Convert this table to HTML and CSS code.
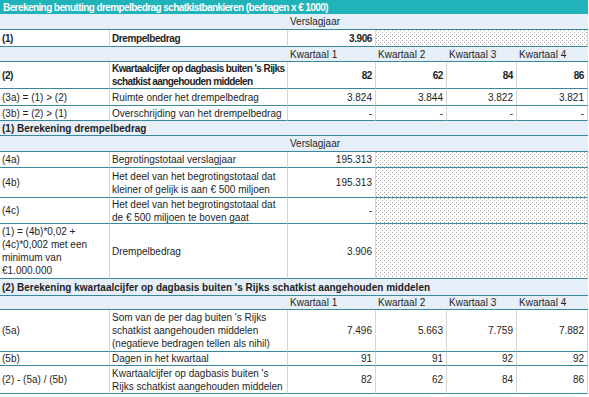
FILE: index.html
```html
<!DOCTYPE html>
<html lang="nl">
<head>
<meta charset="utf-8">
<title>Berekening benutting drempelbedrag</title>
<link rel="stylesheet" href="styles.css">
</head>
<body>
<div class="sheet">
  <div class="title span6">Berekening benutting drempelbedrag schatkistbankieren (bedragen x € 1000)</div>

  <div class="hdr span2"></div>
  <div class="hdr span4">Verslagjaar</div>

  <div class="c b">(1)</div>
  <div class="c b">Drempelbedrag</div>
  <div class="c num b">3.906</div>
  <div class="dots span3"></div>

  <div class="hdr span2"></div>
  <div class="hdr">Kwartaal 1</div>
  <div class="hdr">Kwartaal 2</div>
  <div class="hdr">Kwartaal 3</div>
  <div class="hdr">Kwartaal 4</div>

  <div class="c b">(2)</div>
  <div class="c b cond">Kwartaalcijfer op dagbasis buiten 's Rijks<br>schatkist aangehouden middelen</div>
  <div class="c num b">82</div>
  <div class="c num b">62</div>
  <div class="c num b">84</div>
  <div class="c num b">86</div>

  <div class="c">(3a) = (1) &gt; (2)</div>
  <div class="c">Ruimte onder het drempelbedrag</div>
  <div class="c num">3.824</div>
  <div class="c num">3.844</div>
  <div class="c num">3.822</div>
  <div class="c num">3.821</div>

  <div class="c">(3b) = (2) &gt; (1)</div>
  <div class="c">Overschrijding van het drempelbedrag</div>
  <div class="c num">-</div>
  <div class="c num">-</div>
  <div class="c num">-</div>
  <div class="c num">-</div>

  <div class="hdr span6 sec">(1) Berekening drempelbedrag</div>

  <div class="hdr span2"></div>
  <div class="hdr span4">Verslagjaar</div>

  <div class="c">(4a)</div>
  <div class="c">Begrotingstotaal verslagjaar</div>
  <div class="c num">195.313</div>
  <div class="dots span3"></div>

  <div class="c">(4b)</div>
  <div class="c">Het deel van het begrotingstotaal dat<br>kleiner of gelijk is aan € 500 miljoen</div>
  <div class="c num">195.313</div>
  <div class="dots span3"></div>

  <div class="c">(4c)</div>
  <div class="c">Het deel van het begrotingstotaal dat<br>de € 500 miljoen te boven gaat</div>
  <div class="c num">-</div>
  <div class="dots span3"></div>

  <div class="c">(1) = (4b)*0,02 +<br>(4c)*0,002 met een<br>minimum van<br>€1.000.000</div>
  <div class="c">Drempelbedrag</div>
  <div class="c num">3.906</div>
  <div class="dots span3"></div>

  <div class="hdr span6 sec">(2) Berekening kwartaalcijfer op dagbasis buiten 's Rijks schatkist aangehouden middelen</div>

  <div class="hdr span2"></div>
  <div class="hdr">Kwartaal 1</div>
  <div class="hdr">Kwartaal 2</div>
  <div class="hdr">Kwartaal 3</div>
  <div class="hdr">Kwartaal 4</div>

  <div class="c">(5a)</div>
  <div class="c">Som van de per dag buiten 's Rijks<br>schatkist aangehouden middelen<br>(negatieve bedragen tellen als nihil)</div>
  <div class="c num">7.496</div>
  <div class="c num">5.663</div>
  <div class="c num">7.759</div>
  <div class="c num">7.882</div>

  <div class="c">(5b)</div>
  <div class="c">Dagen in het kwartaal</div>
  <div class="c num">91</div>
  <div class="c num">91</div>
  <div class="c num">92</div>
  <div class="c num">92</div>

  <div class="c">(2) - (5a) / (5b)</div>
  <div class="c">Kwartaalcijfer op dagbasis buiten 's<br>Rijks schatkist aangehouden middelen</div>
  <div class="c num">82</div>
  <div class="c num">62</div>
  <div class="c num">84</div>
  <div class="c num">86</div>
</div>
</body>
</html>
```

FILE: styles.css
```css
html, body {
  margin: 0;
  padding: 0;
  background: #ffffff;
}

.sheet {
  display: grid;
  width: 588px;
  grid-template-columns: 110px 178px 88px 71px 70px 71px;
  grid-template-rows: 14px 16px 17px 15px 27px 17px 15px 15px 16px 16px 30px 26px 55px 17px 14px 42px 14px 28px;
  font-family: "Liberation Sans", Arial, sans-serif;
  font-size: 10px;
  line-height: 13px;
  color: #1e1e1e;
}

.sheet > div {
  box-sizing: border-box;
  display: flex;
  align-items: center;
  padding: 0 2px;
  white-space: nowrap;
  overflow: hidden;
  border-bottom: 1px solid #3a87a0;
}

.span2 { grid-column: span 2; }
.span3 { grid-column: span 3; }
.span4 { grid-column: span 4; }
.span6 { grid-column: span 6; }

.title {
  background: #20b3b9;
  color: #ffffff;
  font-weight: bold;
  letter-spacing: -0.58px;
  border-bottom: none !important;
  padding-left: 3px !important;
}

.hdr {
  background: #e6eef8;
}

.sec {
  font-weight: bold;
}

.c {
  background: #ffffff;
  border-right: 1px solid #d6d6d6;
}

.num {
  justify-content: flex-end;
  padding-right: 3px !important;
}

.b {
  font-weight: bold;
  letter-spacing: -0.4px;
}

.cond {
  letter-spacing: -0.58px;
}

.dots {
  background-color: #ffffff;
  background-image:
    conic-gradient(at 1px 1px, transparent 75%, #a8a8a8 0),
    conic-gradient(at 1px 1px, transparent 75%, #a8a8a8 0);
  background-size: 4px 4px, 4px 4px;
  background-position: 0 0, 2px 2px;
  border-right: 1px solid #d6d6d6;
}
```
